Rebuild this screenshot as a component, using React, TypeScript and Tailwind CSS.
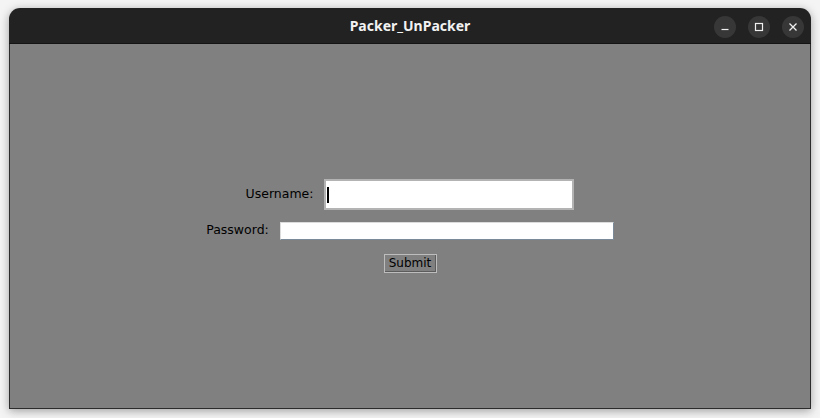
import { ReactNode } from "react";

const WindowButton = ({ children }: { children: ReactNode }): ReactNode => (
  <div className="flex h-[22px] w-[22px] items-center justify-center rounded-full bg-[#373737]">
    {children}
  </div>
);

const TitleBar = (): ReactNode => (
  <div className="relative flex h-[36px] shrink-0 items-center justify-center rounded-t-[11px] border-b border-[#141414] bg-[#222222]">
    <span className="text-[14px] font-bold text-[#f2f2f2] [font-family:'Noto_Sans','DejaVu_Sans',sans-serif]">
      Packer_UnPacker
    </span>
    <div className="absolute right-[7px] top-[8px] flex gap-[12px]">
      <WindowButton>
        <svg width="10" height="10" viewBox="0 0 10 10">
          <path d="M1.5 7.5h7" stroke="#f0f0f0" strokeWidth="1.2" />
        </svg>
      </WindowButton>
      <WindowButton>
        <svg width="10" height="10" viewBox="0 0 10 10">
          <rect x="1.5" y="1.5" width="7" height="7" fill="none" stroke="#f0f0f0" strokeWidth="1.2" />
        </svg>
      </WindowButton>
      <WindowButton>
        <svg width="10" height="10" viewBox="0 0 10 10">
          <path d="M1.5 1.5l7 7M8.5 1.5l-7 7" stroke="#f0f0f0" strokeWidth="1.3" />
        </svg>
      </WindowButton>
    </div>
  </div>
);

const LoginForm = (): ReactNode => (
  <div className="flex flex-1 flex-col items-center justify-center text-[12.5px] text-black [font-family:'DejaVu_Sans',sans-serif]">
    <div className="flex items-center">
      <span className="mr-[11px]">Username:</span>
      <div className="flex h-[31px] w-[250px] items-center border-2 border-[#b3b3b3] bg-white pl-[1px]">
        <div className="h-[16px] w-[2px] bg-black" />
      </div>
    </div>
    <div className="mt-[11px] flex items-center">
      <span className="mr-[11px]">Password:</span>
      <div className="h-[18px] w-[334px] border border-t-[#dcdcdc] border-l-[#dcdcdc] border-b-[#7b8a98] border-r-[#7b8a98] bg-white shadow-[inset_-1px_-1px_0_#ffffff]" />
    </div>
    <button
      type="button"
      className="mt-[14px] h-[19px] w-[53px] border border-[#bdbdbd] bg-[#808080] text-[12px] leading-none text-black shadow-[inset_-1px_-1px_0_#5c5c5c]">
      Submit
    </button>
  </div>
);

export default function App(): ReactNode {
  return (
    <div className="h-[418px] w-[820px] bg-[#f4f4f4] pl-[9px] pt-[8px]">
      <div className="flex h-[401px] w-[802px] flex-col rounded-t-[11px] shadow-[0_2px_10px_rgba(0,0,0,0.35)]">
        <TitleBar />
        <div className="flex flex-1 flex-col border-x border-b border-[#2c2c2c] bg-[#808080]">
          <LoginForm />
        </div>
      </div>
    </div>
  );
}
